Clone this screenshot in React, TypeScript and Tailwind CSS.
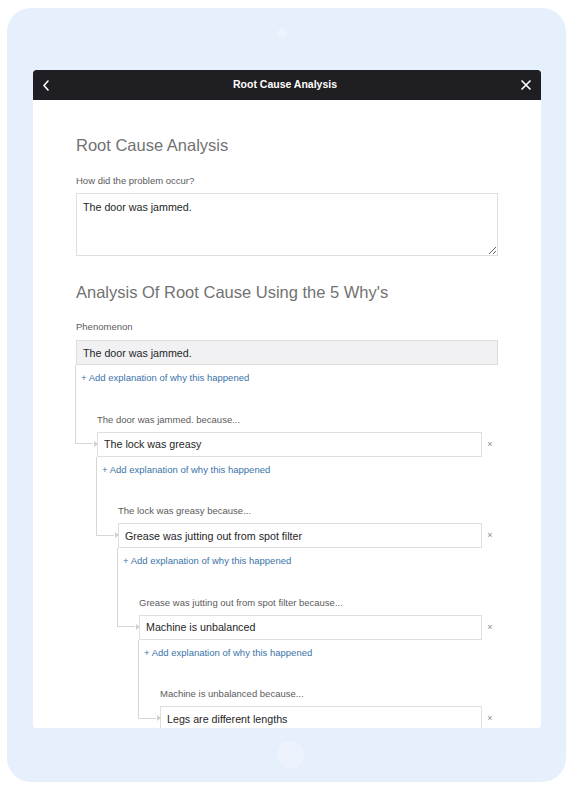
import * as React from "react";

type Why = { label: string; value: string };

const whys: Why[] = [
  { label: "The door was jammed. because...", value: "The lock was greasy" },
  { label: "The lock was greasy because...", value: "Grease was jutting out from spot filter" },
  { label: "Grease was jutting out from spot filter because...", value: "Machine is unbalanced" },
  { label: "Machine is unbalanced because...", value: "Legs are different lengths" },
];

const AddLink = () => (
  <p className="mt-[6px] pl-[5px] text-[9.5px] leading-[14px] text-[#3a73a9]">
    + Add explanation of why this happened
  </p>
);

const WhyNode = ({ index }: { index: number }) => {
  const item = whys[index];
  if (!item) return null;
  return (
    <div className="ml-[21px] mt-[27.5px]">
      <p className="text-[9.5px] leading-[14px] text-[#5b5b5b]">{item.label}</p>
      <div className="mt-[5px] flex items-center">
        <div className="relative flex-1">
          {/* connector from the parent box */}
          <span className="absolute left-[-22px] top-[-66.5px] h-[79px] w-[18px] border-b border-l border-[#d6d6d6]">
            <span className="absolute bottom-[-3.5px] right-[-5px] h-0 w-0 border-y-[3px] border-l-[4px] border-y-transparent border-l-[#d0d0d0]" />
          </span>
          <input
            readOnly
            value={item.value}
            className="block h-[25px] w-full border border-[#dfdfdf] bg-white px-[6px] text-[10.7px] text-[#262626] outline-none"
          />
        </div>
        <span className="w-[16px] text-center text-[9px] leading-none text-[#8a8a8a]">×</span>
      </div>
      <AddLink />
      <WhyNode index={index + 1} />
    </div>
  );
};

const App = () => {
  return (
    <div className="h-[792px] w-[578px] overflow-hidden bg-white pl-[7px] pt-[8px] font-['Liberation_Sans',Arial,sans-serif]">
      <div className="flex h-[774px] w-[559px] flex-col rounded-[24px] bg-[#e6effc] pl-[26px] pt-[20px]">
        <div className="ml-[244px] h-[10px] w-[10px] rounded-full bg-[#edf3fd] blur-[1px]" />
        <div className="mt-[32px] flex h-[658px] w-[508px] flex-col overflow-hidden rounded-[3px] bg-white">
          <div className="flex h-[30px] shrink-0 items-center justify-between rounded-t-[3px] bg-[#1f1e22] px-[9px]">
            <svg width="8" height="11" viewBox="0 0 8 11" fill="none">
              <path d="M6 1L2 5.5L6 10" stroke="white" strokeWidth="1.6" strokeLinecap="round" strokeLinejoin="round" />
            </svg>
            <h1 className="text-[10.5px] font-bold text-white">Root Cause Analysis</h1>
            <svg width="12" height="12" viewBox="0 0 12 12" fill="none">
              <path d="M2 2L10 10M10 2L2 10" stroke="white" strokeWidth="1.7" strokeLinecap="round" />
            </svg>
          </div>

          <div className="px-[43px] pt-[35px]">
            <h2 className="text-[16.5px] leading-[20px] text-[#727272]">Root Cause Analysis</h2>
            <p className="mt-[19px] text-[9.5px] leading-[14px] text-[#5b5b5b]">How did the problem occur?</p>
            <textarea
              readOnly
              defaultValue="The door was jammed."
              className="mt-[5px] block h-[63px] w-full border border-[#dfdfdf] px-[6px] py-[6px] text-[10.7px] leading-[14px] text-[#262626] outline-none"
            />

            <h2 className="mt-[26px] text-[16.5px] leading-[20px] text-[#727272]">
              Analysis Of Root Cause Using the 5 Why's
            </h2>
            <p className="mt-[18px] text-[9.5px] leading-[14px] text-[#5b5b5b]">Phenomenon</p>
            <input
              readOnly
              value="The door was jammed."
              className="mt-[6px] block h-[25px] w-full border border-[#dcdcdc] bg-[#f1f1f3] px-[6px] text-[10.7px] text-[#262626] outline-none"
            />
            <AddLink />
            <WhyNode index={0} />
          </div>
        </div>
        <div className="ml-[244px] mt-[13px] h-[27px] w-[27px] rounded-full bg-[#edf3fd] blur-[1px]" />
      </div>
    </div>
  );
};

export default App;
